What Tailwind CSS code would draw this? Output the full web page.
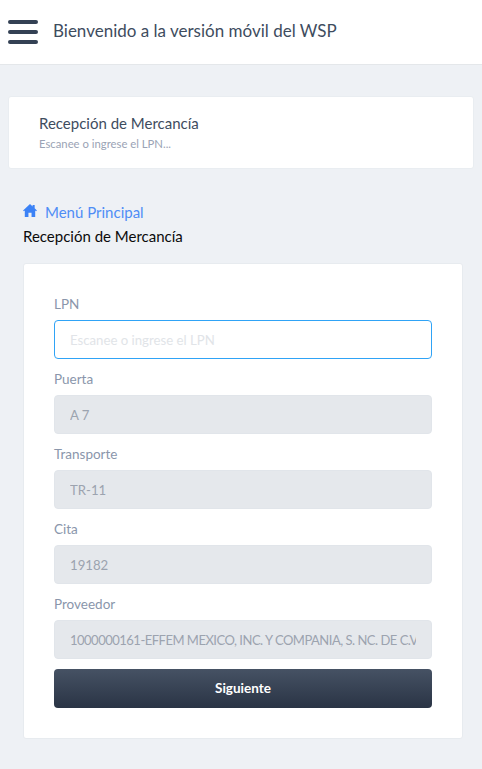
<!DOCTYPE html>
<html lang="es">
  <head>
    <meta charset="UTF-8" />
    <title>WSP</title>
    <script src="https://cdn.jsdelivr.net/npm/@tailwindcss/browser@4"></script>
  </head>
  <body class="bg-[#eef1f5] font-['Lato',sans-serif] h-[769px] overflow-hidden">
    <!-- Header -->
    <header class="h-[65px] bg-white border-b border-[#e4e7ea] flex items-center pl-2">
      <div class="w-[30px] flex flex-col gap-[6px]">
        <span class="block h-1 rounded-full bg-[#344154]"></span>
        <span class="block h-1 rounded-full bg-[#344154]"></span>
        <span class="block h-1 rounded-full bg-[#344154]"></span>
      </div>
      <h1 class="ml-[15px] mt-[-3px] text-[17px] leading-6 text-[#3e4c5e]">Bienvenido a la versión móvil del WSP</h1>
    </header>

    <main class="pt-[31px]">
      <!-- Page title -->
      <section class="mx-2 h-[73px] bg-white rounded-[3px] border border-[#e9edf1] pl-[30px] pt-[16px]">
        <h2 class="text-[15px] leading-5 text-[#3e4c5e]">Recepción de Mercancía</h2>
        <p class="text-[11.3px] leading-4 mt-[3px] text-[#9aa3b5]">Escanee o ingrese el LPN...</p>
      </section>

      <!-- Breadcrumb -->
      <nav class="ml-[23px] mt-[31px]">
        <a class="flex items-center gap-[8px] text-[15px] leading-6 text-[#4f8df5]">
          <svg class="w-[14px] h-[13px] mb-[3px]" viewBox="0 0 16 15" fill="#3b82f6">
            <path d="M8 0 L11 2.8 V1.2 H13.4 V5 L16 7.6 L15 8.4 L14 7.6 V15 H9.8 V10 H6.2 V15 H2 V7.6 L1 8.4 L0 7.6 Z" />
          </svg>
          Menú Principal
        </a>
        <p class="text-[15px] leading-6 text-[#0b0b0b]">Recepción de Mercancía</p>
      </nav>

      <!-- Form -->
      <form class="ml-[23px] mt-[15px] w-[440px] h-[476px] bg-white rounded-[3px] border border-[#e7ebef] px-[30px] pt-[30px]">
        <label class="block text-[13.5px] leading-5 text-[#8a96ab]">LPN</label>
        <input class="block mt-[6px] w-full h-[39px] px-[15px] rounded-[4px] bg-white border border-[#2fa3f6] text-[13.2px] placeholder:text-[#e1e4e8]" placeholder="Escanee o ingrese el LPN" />

        <label class="block mt-[10px] text-[13.5px] leading-5 text-[#8a96ab]">Puerta</label>
        <input class="block mt-[6px] w-full h-[39px] px-[15px] rounded-[4px] bg-[#e5e8ec] border border-[#e1e5ea] text-[13.2px] text-[#9ca3af]" value="A 7" disabled />

        <label class="block mt-[10px] text-[13.5px] leading-5 text-[#8a96ab]">Transporte</label>
        <input class="block mt-[6px] w-full h-[39px] px-[15px] rounded-[4px] bg-[#e5e8ec] border border-[#e1e5ea] text-[13.2px] text-[#9ca3af]" value="TR-11" disabled />

        <label class="block mt-[10px] text-[13.5px] leading-5 text-[#8a96ab]">Cita</label>
        <input class="block mt-[6px] w-full h-[39px] px-[15px] rounded-[4px] bg-[#e5e8ec] border border-[#e1e5ea] text-[13.2px] text-[#9ca3af]" value="19182" disabled />

        <label class="block mt-[10px] text-[13.5px] leading-5 text-[#8a96ab]">Proveedor</label>
        <input class="block mt-[6px] w-full h-[39px] px-[15px] rounded-[4px] bg-[#e5e8ec] border border-[#e1e5ea] text-[13px] tracking-[-0.5px] text-[#9ca3af]" value="1000000161-EFFEM MEXICO, INC. Y COMPANIA, S. NC. DE C.V" disabled />

        <button type="button" class="block mt-[10px] w-full h-[39px] rounded-[4px] bg-gradient-to-b from-[#465264] to-[#2a3445] text-white text-[13.5px] font-bold">Siguiente</button>
      </form>
    </main>
  </body>
</html>
